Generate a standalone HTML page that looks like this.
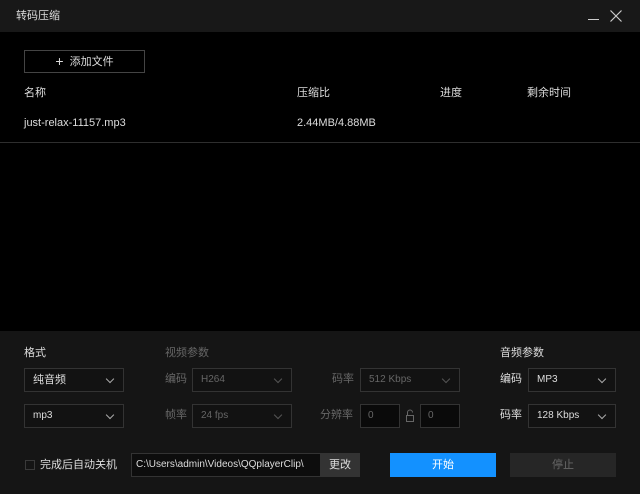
<!DOCTYPE html><html><head><meta charset="utf-8"><style>
*{margin:0;padding:0;box-sizing:border-box}
body{width:640px;height:494px;background:#000;font-family:"Liberation Sans","Noto Sans CJK SC",sans-serif;font-size:11px;line-height:14px;color:#ddd;position:relative;overflow:hidden}
.a{position:absolute;white-space:nowrap}
.box{position:absolute;border:1px solid #333;background:#121212;display:flex;align-items:center;padding-left:8px}
.box span{font-size:10px}
.chev{position:absolute;right:10px;top:7px;width:6px;height:6px;border-right:1px solid #aaa;border-bottom:1px solid #aaa;transform:rotate(45deg)}
.dis{color:#666}
.dis .chev{border-color:#555}
.btn{display:flex;align-items:center;justify-content:center}
</style></head><body>
<div class="a" style="left:0;top:0;width:640px;height:32px;background:#181818"></div>
<div class="a" style="left:16px;top:9px;color:#ddd">转码压缩</div>
<div class="a" style="left:588px;top:19px;width:11px;height:1px;background:#ccc"></div>
<svg class="a" style="left:610px;top:10px" width="12" height="12"><path d="M0.5 0.5L11.5 11.5M11.5 0.5L0.5 11.5" stroke="#ccc" stroke-width="1.2"/></svg>
<div class="a btn" style="left:24px;top:50px;width:121px;height:23px;border:1px solid #444"><span style="font-size:14px;margin-right:6px;margin-top:-2px">+</span><span>添加文件</span></div>
<div class="a" style="left:24px;top:86px">名称</div>
<div class="a" style="left:297px;top:86px">压缩比</div>
<div class="a" style="left:440px;top:86px">进度</div>
<div class="a" style="left:527px;top:86px">剩余时间</div>
<div class="a" style="left:24px;top:116px">just-relax-11157.mp3</div>
<div class="a" style="left:297px;top:116px">2.44MB/4.88MB</div>
<div class="a" style="left:0;top:142px;width:640px;height:1px;background:#2e2e2e"></div>
<div class="a" style="left:0;top:331px;width:640px;height:163px;background:#151515"></div>
<div class="a" style="left:24px;top:346px">格式</div>
<div class="a dis" style="left:165px;top:346px">视频参数</div>
<div class="a" style="left:500px;top:346px">音频参数</div>
<div class="box" style="left:24px;top:368px;width:100px;height:24px"><span style="font-size:11px">纯音频</span><i class="chev"></i></div>
<div class="box" style="left:24px;top:404px;width:100px;height:24px"><span>mp3</span><i class="chev"></i></div>
<div class="a dis" style="left:165px;top:372px">编码</div>
<div class="box dis" style="left:192px;top:368px;width:100px;height:24px"><span>H264</span><i class="chev"></i></div>
<div class="a dis" style="left:165px;top:408px">帧率</div>
<div class="box dis" style="left:192px;top:404px;width:100px;height:24px"><span>24 fps</span><i class="chev"></i></div>
<div class="a dis" style="left:332px;top:372px">码率</div>
<div class="box dis" style="left:360px;top:368px;width:100px;height:24px"><span>512 Kbps</span><i class="chev"></i></div>
<div class="a dis" style="left:320px;top:408px">分辨率</div>
<div class="box dis" style="left:360px;top:404px;width:40px;height:24px;background:#0a0a0a;padding-left:7px"><span>0</span></div>
<svg class="a" style="left:405px;top:409px" width="10" height="14"><path d="M2.5 6V3.5a2.5 2.5 0 0 1 5 0" fill="none" stroke="#666"/><rect x="1.5" y="6.5" width="7" height="6" fill="none" stroke="#666"/></svg>
<div class="box dis" style="left:420px;top:404px;width:40px;height:24px;background:#0a0a0a;padding-left:7px"><span>0</span></div>
<div class="a" style="left:500px;top:372px">编码</div>
<div class="box" style="left:528px;top:368px;width:88px;height:24px"><span>MP3</span><i class="chev"></i></div>
<div class="a" style="left:500px;top:408px">码率</div>
<div class="box" style="left:528px;top:404px;width:88px;height:24px"><span>128 Kbps</span><i class="chev"></i></div>
<div class="a" style="left:25px;top:460px;width:10px;height:10px;border:1px solid #3a3a3a"></div>
<div class="a" style="left:40px;top:458px">完成后自动关机</div>
<div class="box" style="left:131px;top:453px;width:190px;height:24px;background:#0d0d0d;border-color:#333;padding-left:4px"><span>C:\Users\admin\Videos\QQplayerClip\</span></div>
<div class="a btn" style="left:320px;top:453px;width:40px;height:24px;background:#333">更改</div>
<div class="a btn" style="left:390px;top:453px;width:106px;height:24px;background:#1391ff;color:#fff">开始</div>
<div class="a btn" style="left:510px;top:453px;width:106px;height:24px;background:#262626;color:#666">停止</div>
</body></html>
